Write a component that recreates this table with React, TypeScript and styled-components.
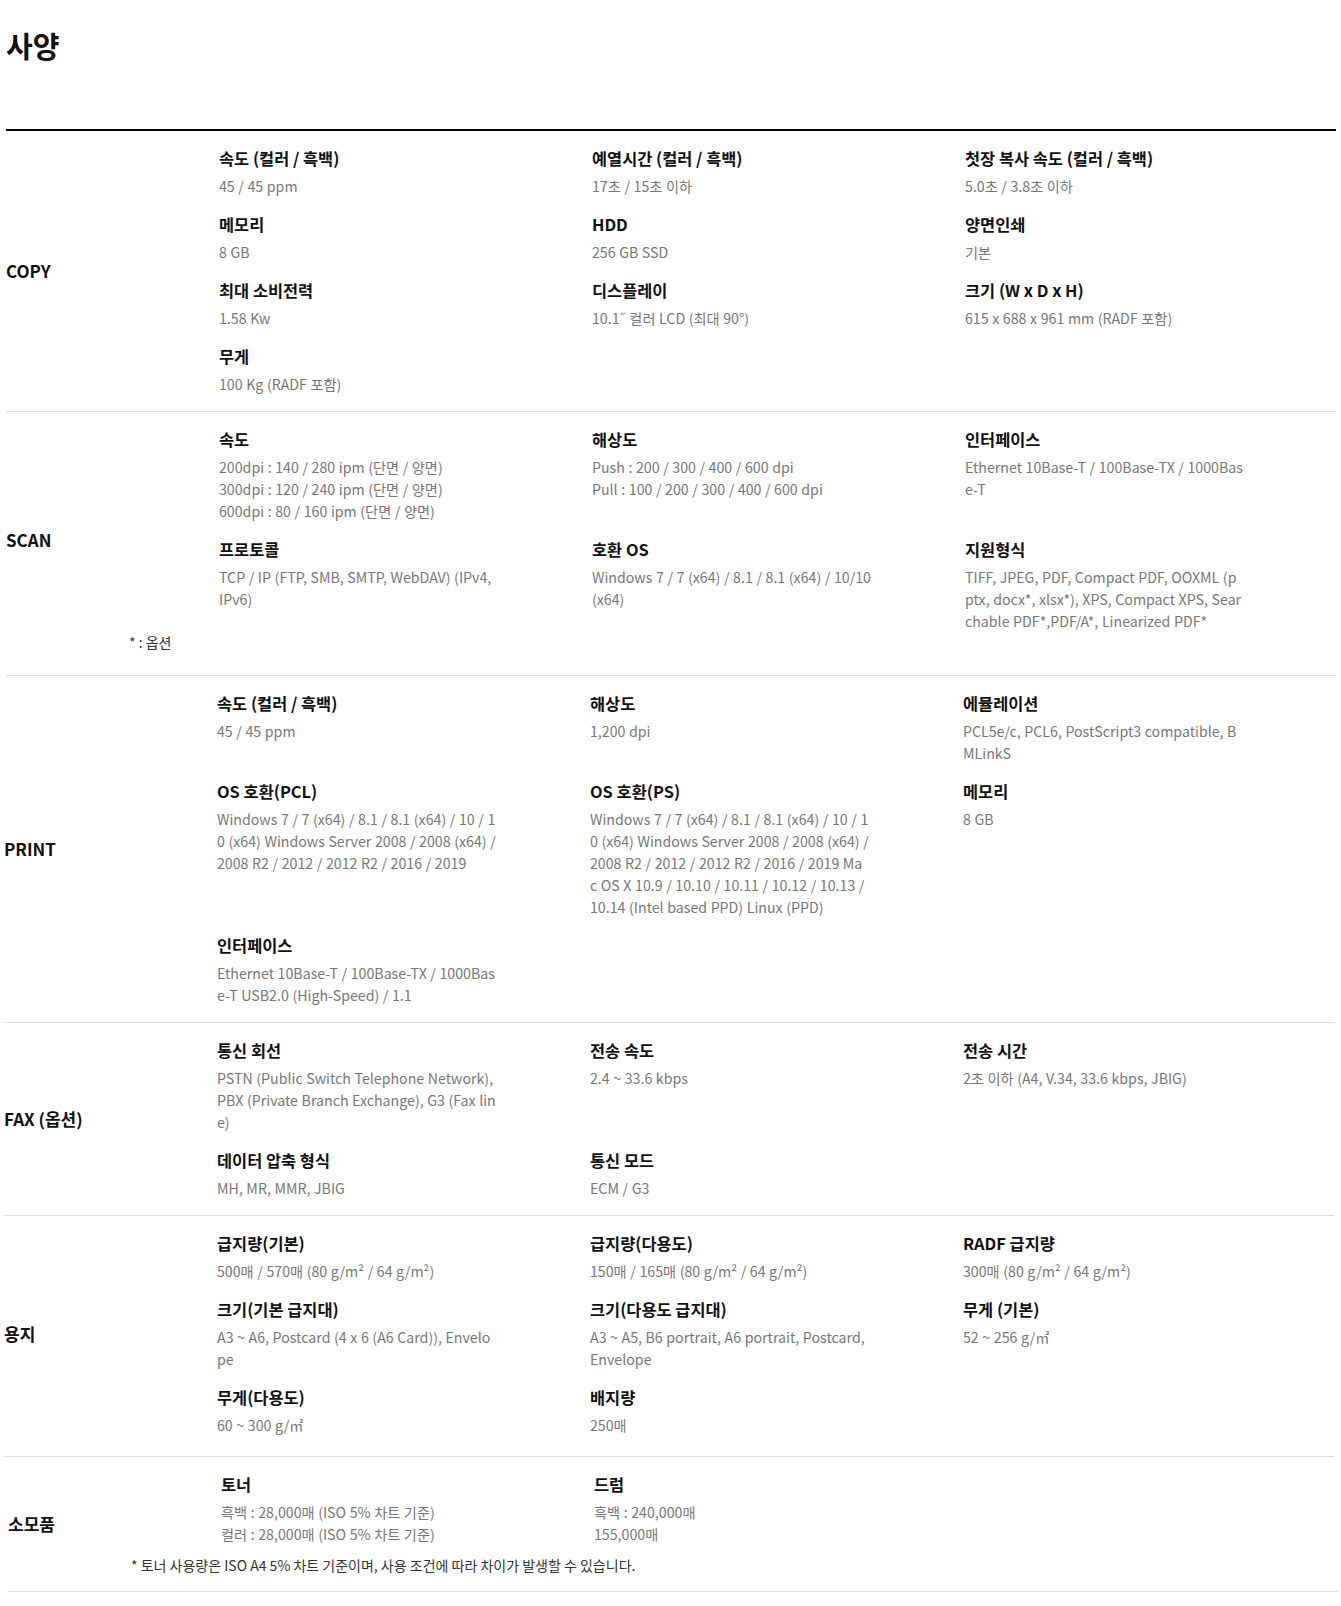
import React from 'react';
import styled, { createGlobalStyle } from 'styled-components';

const GlobalStyle = createGlobalStyle`
  body {
    margin: 0;
    background: #fff;
    font-family: "Noto Sans CJK KR", "Noto Sans", sans-serif;
  }
`;

const Page = styled.div`
  padding: 0 5px 0 6px;
`;

const Title = styled.h2`
  margin: 0 0 64px;
  padding-top: 25px;
  font-size: 29px;
  line-height: 40px;
  font-weight: 700;
  color: #111;
`;

const SpecTable = styled.div`
  border-top: 2px solid #000;
`;

const Section = styled.section<{ $offset?: number; $padBottom?: number }>`
  display: grid;
  grid-template-columns: 213px 1fr;
  padding: 15px 0 ${p => p.$padBottom || 16}px;
  border-bottom: 1px solid #ddd;
  margin-left: ${p => p.$offset || 0}px;
  margin-right: ${p => -(p.$offset || 0)}px;
`;

const Label = styled.h3`
  grid-column: 1;
  grid-row: 1 / span 2;
  align-self: center;
  margin: 0;
  font-size: 17px;
  font-weight: 700;
  color: #111;
`;

const ItemGrid = styled.div`
  grid-column: 2;
  grid-row: 1;
  display: grid;
  grid-template-columns: 373px 373px 1fr;
  row-gap: 15px;
`;

const Item = styled.dl`
  margin: 0;
`;

const ItemTitle = styled.dt`
  font-size: 16.4px;
  line-height: 24px;
  font-weight: 700;
  color: #111;
  margin-bottom: 5px;
`;

// lines are kept as the source page wraps them
const ItemValue = styled.dd`
  margin: 0;
  font-size: 14.2px;
  line-height: 22px;
  word-spacing: 0.4px;
  color: #777;
  white-space: nowrap;
`;

const Note = styled.p<{ $spaced?: boolean }>`
  grid-column: 1 / -1;
  grid-row: 2;
  margin: ${p => (p.$spaced ? '10px 0 0' : '0')};
  padding-left: 123px;
  font-size: 14px;
  line-height: 20px;
  color: #333;
`;

type Spec = { title: string; values: string[] };
type SpecSection = {
  label: string;
  offset?: number;
  padBottom?: number;
  note?: string;
  noteSpaced?: boolean;
  items: Spec[];
};

const sections: SpecSection[] = [
  {
    label: 'COPY',
    items: [
      { title: '속도 (컬러 / 흑백)', values: ['45 / 45 ppm'] },
      { title: '예열시간 (컬러 / 흑백)', values: ['17초 / 15초 이하'] },
      { title: '첫장 복사 속도 (컬러 / 흑백)', values: ['5.0초 / 3.8초 이하'] },
      { title: '메모리', values: ['8 GB'] },
      { title: 'HDD', values: ['256 GB SSD'] },
      { title: '양면인쇄', values: ['기본'] },
      { title: '최대 소비전력', values: ['1.58 Kw'] },
      { title: '디스플레이', values: ['10.1˝ 컬러 LCD (최대 90°)'] },
      { title: '크기 (W x D x H)', values: ['615 x 688 x 961 mm (RADF 포함)'] },
      { title: '무게', values: ['100 Kg (RADF 포함)'] },
    ],
  },
  {
    label: 'SCAN',
    padBottom: 23,
    note: '* : 옵션',
    items: [
      {
        title: '속도',
        values: [
          '200dpi : 140 / 280 ipm (단면 / 양면)',
          '300dpi : 120 / 240 ipm (단면 / 양면)',
          '600dpi : 80 / 160 ipm (단면 / 양면)',
        ],
      },
      { title: '해상도', values: ['Push : 200 / 300 / 400 / 600 dpi', 'Pull : 100 / 200 / 300 / 400 / 600 dpi'] },
      { title: '인터페이스', values: ['Ethernet 10Base-T / 100Base-TX / 1000Bas', 'e-T'] },
      { title: '프로토콜', values: ['TCP / IP (FTP, SMB, SMTP, WebDAV) (IPv4,', 'IPv6)'] },
      { title: '호환 OS', values: ['Windows 7 / 7 (x64) / 8.1 / 8.1 (x64) / 10/10', '(x64)'] },
      {
        title: '지원형식',
        values: [
          'TIFF, JPEG, PDF, Compact PDF, OOXML (p',
          'ptx, docx*, xlsx*), XPS, Compact XPS, Sear',
          'chable PDF*,PDF/A*, Linearized PDF*',
        ],
      },
    ],
  },
  {
    label: 'PRINT',
    offset: -2,
    items: [
      { title: '속도 (컬러 / 흑백)', values: ['45 / 45 ppm'] },
      { title: '해상도', values: ['1,200 dpi'] },
      { title: '에뮬레이션', values: ['PCL5e/c, PCL6, PostScript3 compatible, B', 'MLinkS'] },
      {
        title: 'OS 호환(PCL)',
        values: [
          'Windows 7 / 7 (x64) / 8.1 / 8.1 (x64) / 10 / 1',
          '0 (x64) Windows Server 2008 / 2008 (x64) /',
          '2008 R2 / 2012 / 2012 R2 / 2016 / 2019',
        ],
      },
      {
        title: 'OS 호환(PS)',
        values: [
          'Windows 7 / 7 (x64) / 8.1 / 8.1 (x64) / 10 / 1',
          '0 (x64) Windows Server 2008 / 2008 (x64) /',
          '2008 R2 / 2012 / 2012 R2 / 2016 / 2019 Ma',
          'c OS X 10.9 / 10.10 / 10.11 / 10.12 / 10.13 /',
          '10.14 (Intel based PPD) Linux (PPD)',
        ],
      },
      { title: '메모리', values: ['8 GB'] },
      { title: '인터페이스', values: ['Ethernet 10Base-T / 100Base-TX / 1000Bas', 'e-T USB2.0 (High-Speed) / 1.1'] },
    ],
  },
  {
    label: 'FAX (옵션)',
    offset: -2,
    items: [
      {
        title: '통신 회선',
        values: ['PSTN (Public Switch Telephone Network),', 'PBX (Private Branch Exchange), G3 (Fax lin', 'e)'],
      },
      { title: '전송 속도', values: ['2.4 ~ 33.6 kbps'] },
      { title: '전송 시간', values: ['2초 이하 (A4, V.34, 33.6 kbps, JBIG)'] },
      { title: '데이터 압축 형식', values: ['MH, MR, MMR, JBIG'] },
      { title: '통신 모드', values: ['ECM / G3'] },
    ],
  },
  {
    label: '용지',
    offset: -2,
    padBottom: 20,
    items: [
      { title: '급지량(기본)', values: ['500매 / 570매 (80 g/m² / 64 g/m²)'] },
      { title: '급지량(다용도)', values: ['150매 / 165매 (80 g/m² / 64 g/m²)'] },
      { title: 'RADF 급지량', values: ['300매 (80 g/m² / 64 g/m²)'] },
      { title: '크기(기본 급지대)', values: ['A3 ~ A6, Postcard (4 x 6 (A6 Card)), Envelo', 'pe'] },
      { title: '크기(다용도 급지대)', values: ['A3 ~ A5, B6 portrait, A6 portrait, Postcard,', 'Envelope'] },
      { title: '무게 (기본)', values: ['52 ~ 256 g/㎡'] },
      { title: '무게(다용도)', values: ['60 ~ 300 g/㎡'] },
      { title: '배지량', values: ['250매'] },
    ],
  },
  {
    label: '소모품',
    offset: 2,
    note: '* 토너 사용량은 ISO A4 5% 차트 기준이며, 사용 조건에 따라 차이가 발생할 수 있습니다.',
    noteSpaced: true,
    items: [
      { title: '토너', values: ['흑백 : 28,000매 (ISO 5% 차트 기준)', '컬러 : 28,000매 (ISO 5% 차트 기준)'] },
      { title: '드럼', values: ['흑백 : 240,000매', '155,000매'] },
    ],
  },
];

const App: React.FC = () => {
  return (
    <Page>
      <GlobalStyle />
      <Title>사양</Title>
      <SpecTable>
        {sections.map(s => (
          <Section key={s.label} $offset={s.offset} $padBottom={s.padBottom}>
            <Label>{s.label}</Label>
            <ItemGrid>
              {s.items.map((item, i) => (
                <Item key={i}>
                  <ItemTitle>{item.title}</ItemTitle>
                  {item.values.map((v, j) => (
                    <ItemValue key={j}>{v}</ItemValue>
                  ))}
                </Item>
              ))}
            </ItemGrid>
            {s.note && <Note $spaced={s.noteSpaced}>{s.note}</Note>}
          </Section>
        ))}
      </SpecTable>
    </Page>
  );
};

export default App;
